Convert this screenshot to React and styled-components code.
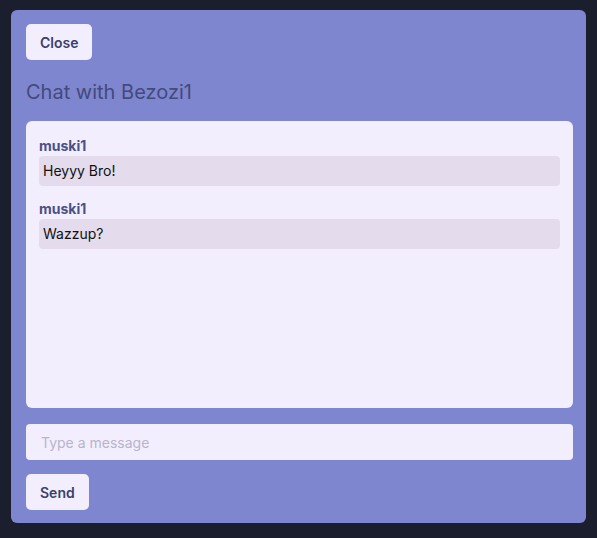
import React from 'react';
import styled, { createGlobalStyle } from 'styled-components';

const GlobalStyle = createGlobalStyle`
	html, body {
		margin: 0;
		background: #1b1e2c;
		font-family: Inter, "Noto Sans", sans-serif;
	}
`;

const Page = styled.div`
	padding: 10px 11px 15px 11px;
`;

const Panel = styled.div`
	background: #7e86cf;
	border-radius: 6px;
	padding: 14px 13px 13px 15px;
	display: flex;
	flex-direction: column;
	align-items: flex-start;
`;

const Button = styled.button`
	background: #f3eefd;
	color: #3a3f6b;
	border: none;
	border-radius: 5px;
	height: 36px;
	padding: 0 14px;
	font-family: inherit;
	font-size: 14px;
	font-weight: 600;
	cursor: pointer;
`;

const Title = styled.h2`
	margin: 20px 0 17px;
	font-size: 20px;
	line-height: 24px;
	font-weight: 400;
	color: #434a7c;
`;

const ChatBox = styled.div`
	align-self: stretch;
	height: 287px;
	box-sizing: border-box;
	background: #f3eefd;
	border-radius: 6px;
	padding: 16px 13px 14px;
	display: flex;
	flex-direction: column;
	gap: 14px;
`;

const Message = styled.div`
	display: flex;
	flex-direction: column;
	gap: 2px;
`;

const Author = styled.div`
	font-size: 14px;
	line-height: 17px;
	font-weight: 700;
	color: #4a5087;
`;

const Bubble = styled.div`
	background: #e4dcec;
	border-radius: 4px;
	padding: 6px 4px;
	font-size: 14px;
	line-height: 18px;
	color: #111;
`;

const Input = styled.input`
	align-self: stretch;
	margin: 16px 0 14px;
	height: 36px;
	box-sizing: border-box;
	border: none;
	border-radius: 4px;
	background: #f3eefd;
	padding: 0 15px;
	font-family: inherit;
	font-size: 14px;
	outline: none;

	&::placeholder {
		color: #b8b4cc;
	}
`;

const messages = [
	{ author: 'muski1', text: 'Heyyy Bro!' },
	{ author: 'muski1', text: 'Wazzup?' },
];

function App() {
	return (
		<Page>
			<GlobalStyle />
			<Panel>
				<Button>Close</Button>
				<Title>Chat with Bezozi1</Title>
				<ChatBox>
					{messages.map((m, i) => (
						<Message key={i}>
							<Author>{m.author}</Author>
							<Bubble>{m.text}</Bubble>
						</Message>
					))}
				</ChatBox>
				<Input placeholder="Type a message" />
				<Button>Send</Button>
			</Panel>
		</Page>
	);
}

export default App;
